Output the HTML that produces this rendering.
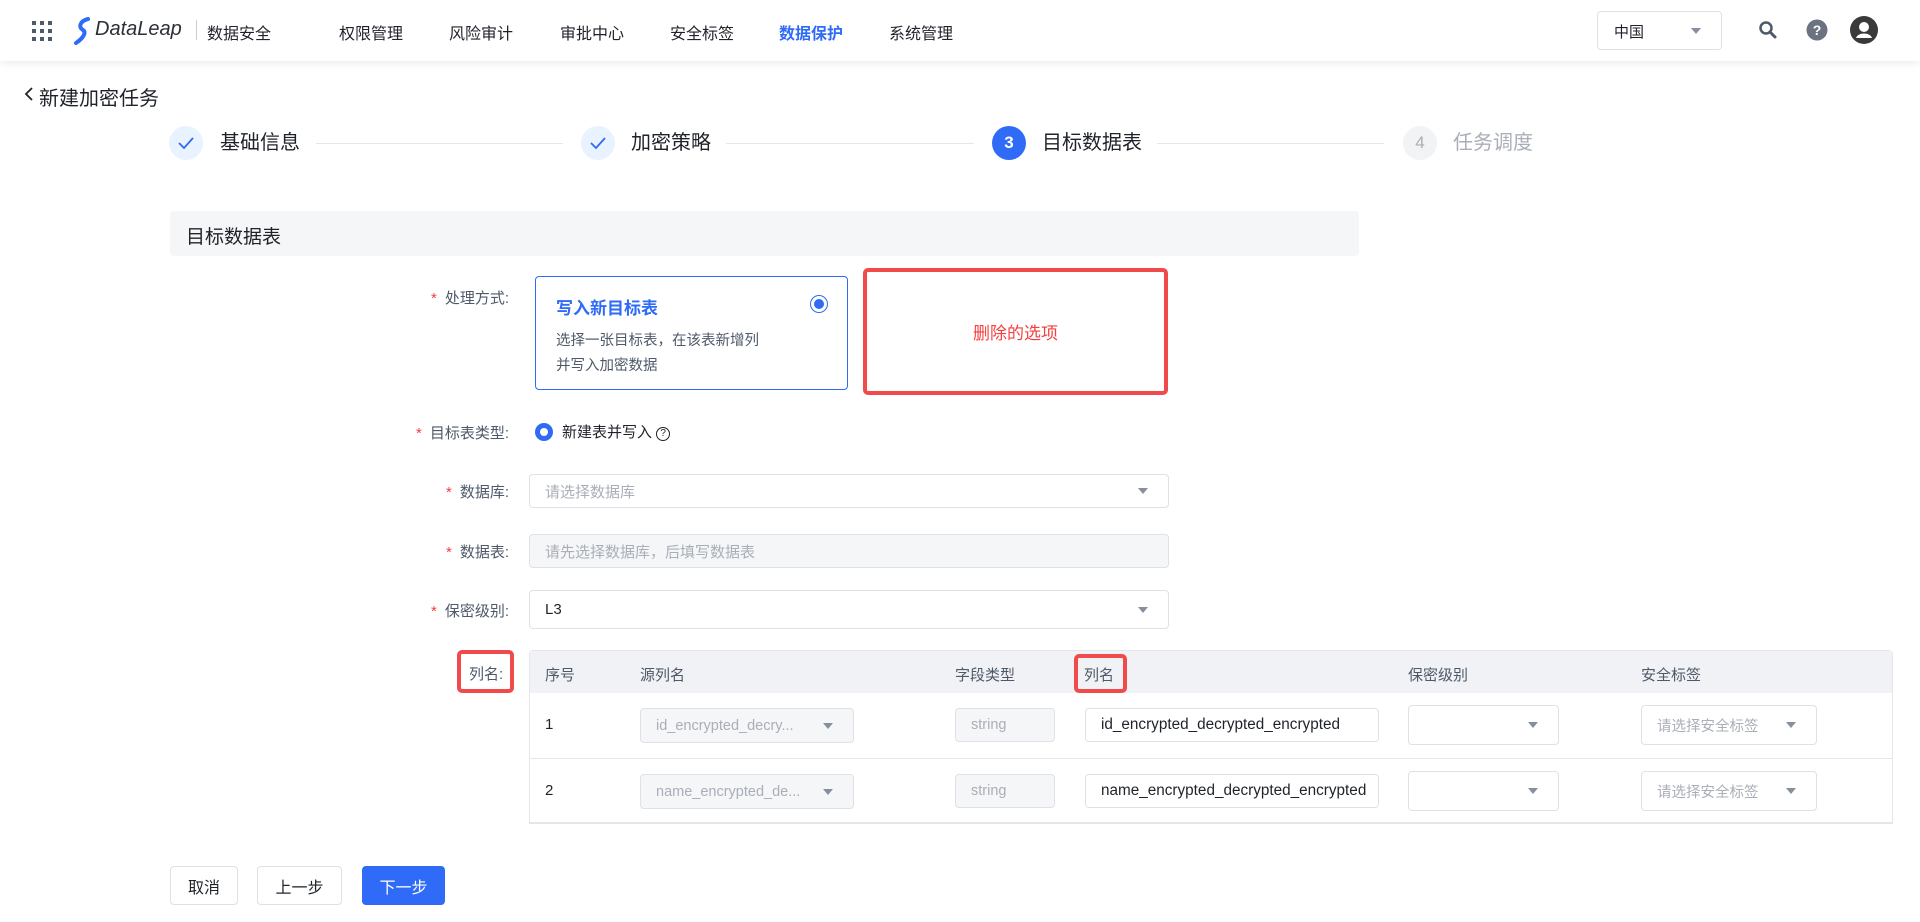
<!DOCTYPE html>
<html><head><meta charset="utf-8"><style>
*{box-sizing:border-box;margin:0;padding:0}
body{width:1920px;height:922px;background:#fff;font-family:"Liberation Sans","Noto Sans CJK SC",sans-serif;color:#1f2329;position:relative;overflow:hidden}
.abs{position:absolute}
.hdr{left:0;top:0;width:1920px;height:61px;background:#fff;box-shadow:0 2px 8px rgba(0,0,0,.08)}
.nav{top:20px;font-size:16px;color:#1f2329}
.circ{width:34px;height:34px;border-radius:50%;top:126px;display:flex;align-items:center;justify-content:center;font-size:17px}
.stxt{top:130px;font-size:20px;line-height:26px}
.line{top:143px;height:1px;background:#e5e6eb}
.lbl{right:1411px;font-size:15px;color:#4e5969;white-space:nowrap}
.lbl b{color:#f53f3f;font-weight:normal;margin-right:8px}
.inp{border:1px solid #dfe1e6;border-radius:4px;background:#fff;font-size:15px;display:flex;align-items:center;padding-left:15px}
.arr{position:absolute;right:20px;top:50%;margin-top:-3px;width:0;height:0;border-left:5px solid transparent;border-right:5px solid transparent;border-top:6px solid #86909c}
.th{top:664px;font-size:15px;color:#4e5969}
.btn{top:866px;height:39px;border:1px solid #dfe1e6;border-radius:4px;font-size:16px;display:flex;align-items:center;justify-content:center;background:#fff}
</style></head><body>
<div class="abs hdr"></div>
<svg class="abs" style="left:32px;top:21px" width="20" height="20"><g fill="#4e5969"><rect x="0" y="0" width="4" height="4"/><rect x="8" y="0" width="4" height="4"/><rect x="16" y="0" width="4" height="4"/><rect x="0" y="8" width="4" height="4"/><rect x="8" y="8" width="4" height="4"/><rect x="16" y="8" width="4" height="4"/><rect x="0" y="16" width="4" height="4"/><rect x="8" y="16" width="4" height="4"/><rect x="16" y="16" width="4" height="4"/></g></svg>
<svg class="abs" style="left:74px;top:17px" width="18" height="28"><path d="M14 2 C6 4 4 10 9 13 C13 16 8 22 2 26" stroke="#2f6bf6" stroke-width="4" fill="none" stroke-linecap="round"/></svg>
<div class="abs" style="left:95px;top:18px;font-size:20px;font-style:italic;color:#2b2f36">DataLeap</div>
<div class="abs" style="left:196px;top:20px;width:1px;height:20px;background:#c9cdd4"></div>
<div class="abs" style="left:207px;top:20px;font-size:16px">数据安全</div>
<div class="abs nav" style="left:339px">权限管理</div>
<div class="abs nav" style="left:449px">风险审计</div>
<div class="abs nav" style="left:560px">审批中心</div>
<div class="abs nav" style="left:670px">安全标签</div>
<div class="abs nav" style="left:779px;color:#2f6bf6;font-weight:bold">数据保护</div>
<div class="abs nav" style="left:889px">系统管理</div>
<div class="abs" style="left:1597px;top:11px;width:125px;height:39px;border:1px solid #dfe1e6;border-radius:4px"><span class="abs" style="left:16px;top:9px;font-size:15px">中国</span><span class="arr"></span></div>
<svg class="abs" style="left:1758px;top:20px" width="20" height="20"><circle cx="8" cy="8" r="5.5" stroke="#4e5969" stroke-width="2.5" fill="none"/><path d="M12 12 L17 17" stroke="#4e5969" stroke-width="3" stroke-linecap="round"/></svg>
<svg class="abs" style="left:1806px;top:19px" width="22" height="22"><circle cx="11" cy="11" r="10.5" fill="#6b7280"/><text x="11" y="16" text-anchor="middle" font-size="14" font-weight="bold" fill="#fff" font-family="Liberation Sans">?</text></svg>
<svg class="abs" style="left:1850px;top:16px" width="28" height="28"><circle cx="14" cy="14" r="14" fill="#3a3a3a"/><circle cx="14" cy="11" r="5" fill="#fff"/><path d="M6 22 C8 16 20 16 22 22 Z" fill="#fff"/></svg>

<svg class="abs" style="left:24px;top:86px" width="10" height="16"><path d="M8 2 L2 8 L8 14" stroke="#1f2329" stroke-width="1.8" fill="none"/></svg>
<div class="abs" style="left:39px;top:82px;font-size:20px">新建加密任务</div>

<div class="abs circ" style="left:169px;background:#e8f3ff"><svg width="16" height="12"><path d="M1 6 L6 11 L15 1" stroke="#2f6bf6" stroke-width="1.8" fill="none"/></svg></div>
<div class="abs stxt" style="left:220px">基础信息</div>
<div class="abs line" style="left:316px;width:247px"></div>
<div class="abs circ" style="left:581px;background:#e8f3ff"><svg width="16" height="12"><path d="M1 6 L6 11 L15 1" stroke="#2f6bf6" stroke-width="1.8" fill="none"/></svg></div>
<div class="abs stxt" style="left:631px">加密策略</div>
<div class="abs line" style="left:726px;width:248px"></div>
<div class="abs circ" style="left:992px;background:#2f6bf6;color:#fff;font-weight:bold">3</div>
<div class="abs stxt" style="left:1042px">目标数据表</div>
<div class="abs line" style="left:1157px;width:227px"></div>
<div class="abs circ" style="left:1403px;background:#f2f3f5;color:#a9aeb8">4</div>
<div class="abs stxt" style="left:1453px;color:#a9aeb8">任务调度</div>

<div class="abs" style="left:170px;top:211px;width:1189px;height:45px;background:#f5f6f7;border-radius:4px"><span class="abs" style="left:16px;top:11px;font-size:19px">目标数据表</span></div>

<div class="abs lbl" style="top:287px"><b>*</b>处理方式:</div>
<div class="abs" style="left:535px;top:276px;width:313px;height:114px;border:1px solid #2f6bf6;border-radius:4px">
<div class="abs" style="left:20px;top:17px;font-size:17px;font-weight:bold;color:#2f6bf6">写入新目标表</div>
<div class="abs" style="left:274px;top:18px;width:18px;height:18px;border:1px solid #2f6bf6;border-radius:50%"><div style="margin:3px;width:10px;height:10px;border-radius:50%;background:#2f6bf6"></div></div>
<div class="abs" style="left:20px;top:52px;font-size:14.5px;line-height:25px;color:#4e5969">选择一张目标表，在该表新增列<br>并写入加密数据</div>
</div>
<div class="abs" style="left:863px;top:268px;width:305px;height:127px;border:4px solid #f04a4a;border-radius:5px;display:flex;align-items:center;justify-content:center;color:#f53f3f;font-size:17px">删除的选项</div>

<div class="abs lbl" style="top:422px"><b>*</b>目标表类型:</div>
<div class="abs" style="left:535px;top:423px;width:18px;height:18px;border-radius:50%;background:#2f6bf6"><div style="margin:5px;width:8px;height:8px;border-radius:50%;background:#fff"></div></div>
<div class="abs" style="left:562px;top:421px;font-size:15px">新建表并写入 <span style="display:inline-block;width:14px;height:14px;border:1.3px solid #1f2329;border-radius:50%;font-size:10px;text-align:center;line-height:12px;vertical-align:1px">?</span></div>

<div class="abs lbl" style="top:481px"><b>*</b>数据库:</div>
<div class="abs inp" style="left:529px;top:474px;width:640px;height:34px;color:#a9aeb8">请选择数据库<span class="arr"></span></div>
<div class="abs lbl" style="top:541px"><b>*</b>数据表:</div>
<div class="abs inp" style="left:529px;top:534px;width:640px;height:34px;color:#a9aeb8;background:#f5f6f7">请先选择数据库，后填写数据表</div>
<div class="abs lbl" style="top:600px"><b>*</b>保密级别:</div>
<div class="abs inp" style="left:529px;top:590px;width:640px;height:39px">L3<span class="arr"></span></div>

<div class="abs" style="left:457px;top:650px;width:57px;height:43px;border:4px solid #f04a4a;border-radius:5px;font-size:15px;color:#4e5969;padding:9px 0 0 8px">列名:</div>
<div class="abs" style="left:529px;top:650px;width:1364px;height:174px;border:1px solid #e5e6eb;border-bottom:2px solid #e5e6eb;border-radius:4px 4px 0 0"></div>
<div class="abs" style="left:530px;top:651px;width:1362px;height:42px;background:#f0f2f5"></div>
<div class="abs" style="left:530px;top:758px;width:1362px;height:1px;background:#e5e6eb"></div>
<div class="abs th" style="left:545px">序号</div>
<div class="abs th" style="left:640px">源列名</div>
<div class="abs th" style="left:955px">字段类型</div>
<div class="abs" style="left:1074px;top:654px;width:53px;height:39px;border:4px solid #f04a4a;border-radius:5px;font-size:15px;color:#4e5969;padding:6px 0 0 6px">列名</div>
<div class="abs th" style="left:1408px">保密级别</div>
<div class="abs th" style="left:1641px">安全标签</div>

<div class="abs" style="left:545px;top:716px;font-size:15px">1</div>
<div class="abs inp" style="left:640px;top:708px;width:214px;height:35px;background:#f5f6f7;color:#a9aeb8;font-size:14.5px">id_encrypted_decry...<span class="arr"></span></div>
<div class="abs inp" style="left:955px;top:708px;width:100px;height:34px;background:#f5f6f7;color:#a9aeb8;font-size:14.5px">string</div>
<div class="abs inp" style="left:1085px;top:708px;width:294px;height:34px;font-size:15.3px;overflow:hidden;white-space:nowrap">id_encrypted_decrypted_encrypted</div>
<div class="abs inp" style="left:1408px;top:705px;width:151px;height:40px"><span class="arr"></span></div>
<div class="abs inp" style="left:1641px;top:705px;width:176px;height:40px;color:#a9aeb8;font-size:14.5px">请选择安全标签<span class="arr"></span></div>

<div class="abs" style="left:545px;top:782px;font-size:15px">2</div>
<div class="abs inp" style="left:640px;top:774px;width:214px;height:35px;background:#f5f6f7;color:#a9aeb8;font-size:14.5px">name_encrypted_de...<span class="arr"></span></div>
<div class="abs inp" style="left:955px;top:774px;width:100px;height:34px;background:#f5f6f7;color:#a9aeb8;font-size:14.5px">string</div>
<div class="abs inp" style="left:1085px;top:774px;width:294px;height:34px;font-size:15.3px;overflow:hidden;white-space:nowrap;padding-right:2px">name_encrypted_decrypted_encrypted</div>
<div class="abs inp" style="left:1408px;top:771px;width:151px;height:40px"><span class="arr"></span></div>
<div class="abs inp" style="left:1641px;top:771px;width:176px;height:40px;color:#a9aeb8;font-size:14.5px">请选择安全标签<span class="arr"></span></div>

<div class="abs btn" style="left:170px;width:68px">取消</div>
<div class="abs btn" style="left:257px;width:85px">上一步</div>
<div class="abs btn" style="left:362px;width:83px;background:#2f6bf6;border-color:#2f6bf6;color:#fff">下一步</div>
</body></html>
